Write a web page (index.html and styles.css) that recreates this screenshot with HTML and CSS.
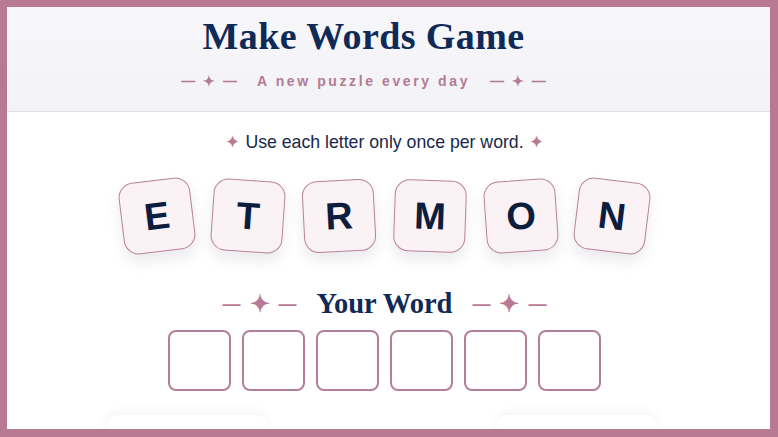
FILE: index.html
```html
<!DOCTYPE html>
<html lang="en">
<head>
<meta charset="utf-8">
<title>Make Words Game</title>
<link rel="stylesheet" href="styles.css">
</head>
<body>
<div class="frame">
  <header class="header">
    <h1 class="title">Make Words Game</h1>
    <div class="tagline">
      <span class="deco">— ✦ —</span>
      <span class="tagline-text">A new puzzle every day</span>
      <span class="deco">— ✦ —</span>
    </div>
  </header>
  <main class="main">
    <p class="hint"><span class="star">✦</span> Use each letter only once per word. <span class="star">✦</span></p>
    <div class="tiles">
      <div class="tile t1">E</div>
      <div class="tile t2">T</div>
      <div class="tile t3">R</div>
      <div class="tile t4">M</div>
      <div class="tile t5">O</div>
      <div class="tile t6">N</div>
    </div>
    <h2 class="word-title">
      <span class="deco2"><span>—</span><span class="big-star">✦</span><span>—</span></span>
      <span class="word-text">Your Word</span>
      <span class="deco2"><span>—</span><span class="big-star">✦</span><span>—</span></span>
    </h2>
    <div class="slots">
      <div class="slot"></div>
      <div class="slot"></div>
      <div class="slot"></div>
      <div class="slot"></div>
      <div class="slot"></div>
      <div class="slot"></div>
    </div>
    <div class="below">
      <div class="ghost"></div>
      <div class="ghost"></div>
    </div>
  </main>
</div>
</body>
</html>
```
FILE: styles.css
```css
* { box-sizing: border-box; }
html, body { margin: 0; padding: 0; }
body {
  background: #ffffff;
  font-family: "Liberation Sans", Arial, sans-serif;
}
.frame {
  height: 100vh;
  overflow: hidden;
  border-style: solid;
  border-color: #b87a93;
  border-width: 7px 8px 8px 7px;
  background: #ffffff;
}
.header {
  height: 105px;
  background: linear-gradient(#f7f6f9, #f3f2f6);
  border-bottom: 1px solid #e2dfe4;
  padding: 9px 50px 0 0;
  text-align: center;
}
.title {
  margin: 0;
  font-family: "Liberation Serif", "Times New Roman", serif;
  font-weight: bold;
  font-size: 38px;
  line-height: 40px;
  color: #0f2a57;
  letter-spacing: 0.4px;
}
.tagline {
  margin-top: 16px;
  display: flex;
  justify-content: center;
  align-items: center;
  gap: 20px;
  color: #b27c95;
  font-weight: bold;
  font-size: 14px;
  line-height: 18px;
}
.tagline-text { letter-spacing: 2.6px; }
.deco { letter-spacing: 0; word-spacing: 4px; }
.main {
  padding: 19px 8px 0 0;
  text-align: center;
}
.hint {
  margin: 0;
  font-size: 17.7px;
  line-height: 22px;
  color: #17284a;
}
.star { color: #b87a93; }
.tiles {
  margin-top: 27px;
  display: flex;
  justify-content: center;
  gap: 19px;
}
.tile {
  width: 72px;
  height: 72px;
  border: 1px solid #b98299;
  border-radius: 15px;
  background: #faf2f5;
  box-shadow: 0 8px 14px rgba(60, 60, 90, 0.10);
  display: flex;
  align-items: center;
  justify-content: center;
  font-size: 38px;
  font-weight: bold;
  color: #0c1d3d;
}
.t1 { transform: rotate(-7deg); }
.t2 { transform: rotate(4deg); }
.t3 { transform: rotate(-3deg); }
.t4 { transform: rotate(2deg); }
.t5 { transform: rotate(-4deg); }
.t6 { transform: rotate(7deg); }
.word-title {
  margin: 37px 0 0;
  display: flex;
  justify-content: center;
  align-items: center;
  gap: 20px;
  font-weight: normal;
  line-height: 30px;
}
.deco2 {
  color: #b87a93;
  font-size: 18px;
  font-weight: bold;
  display: flex;
  align-items: center;
  gap: 9px;
}
.big-star { font-size: 24px; }
.word-text {
  font-family: "Liberation Serif", "Times New Roman", serif;
  font-weight: bold;
  font-size: 28.5px;
  color: #0f2a57;
}
.slots {
  margin-top: 11px;
  display: flex;
  justify-content: center;
  gap: 11px;
}
.slot {
  width: 63px;
  height: 61px;
  border: 2px solid #b2809a;
  border-radius: 8px;
  background: #ffffff;
}
.below {
  margin-top: 24px;
  display: flex;
  justify-content: space-between;
  padding: 0 105px 0 100px;
}
.ghost {
  width: 160px;
  height: 20px;
  border-radius: 10px;
  background: #ffffff;
  box-shadow: 0 -3px 10px rgba(80, 80, 100, 0.06);
}
```
